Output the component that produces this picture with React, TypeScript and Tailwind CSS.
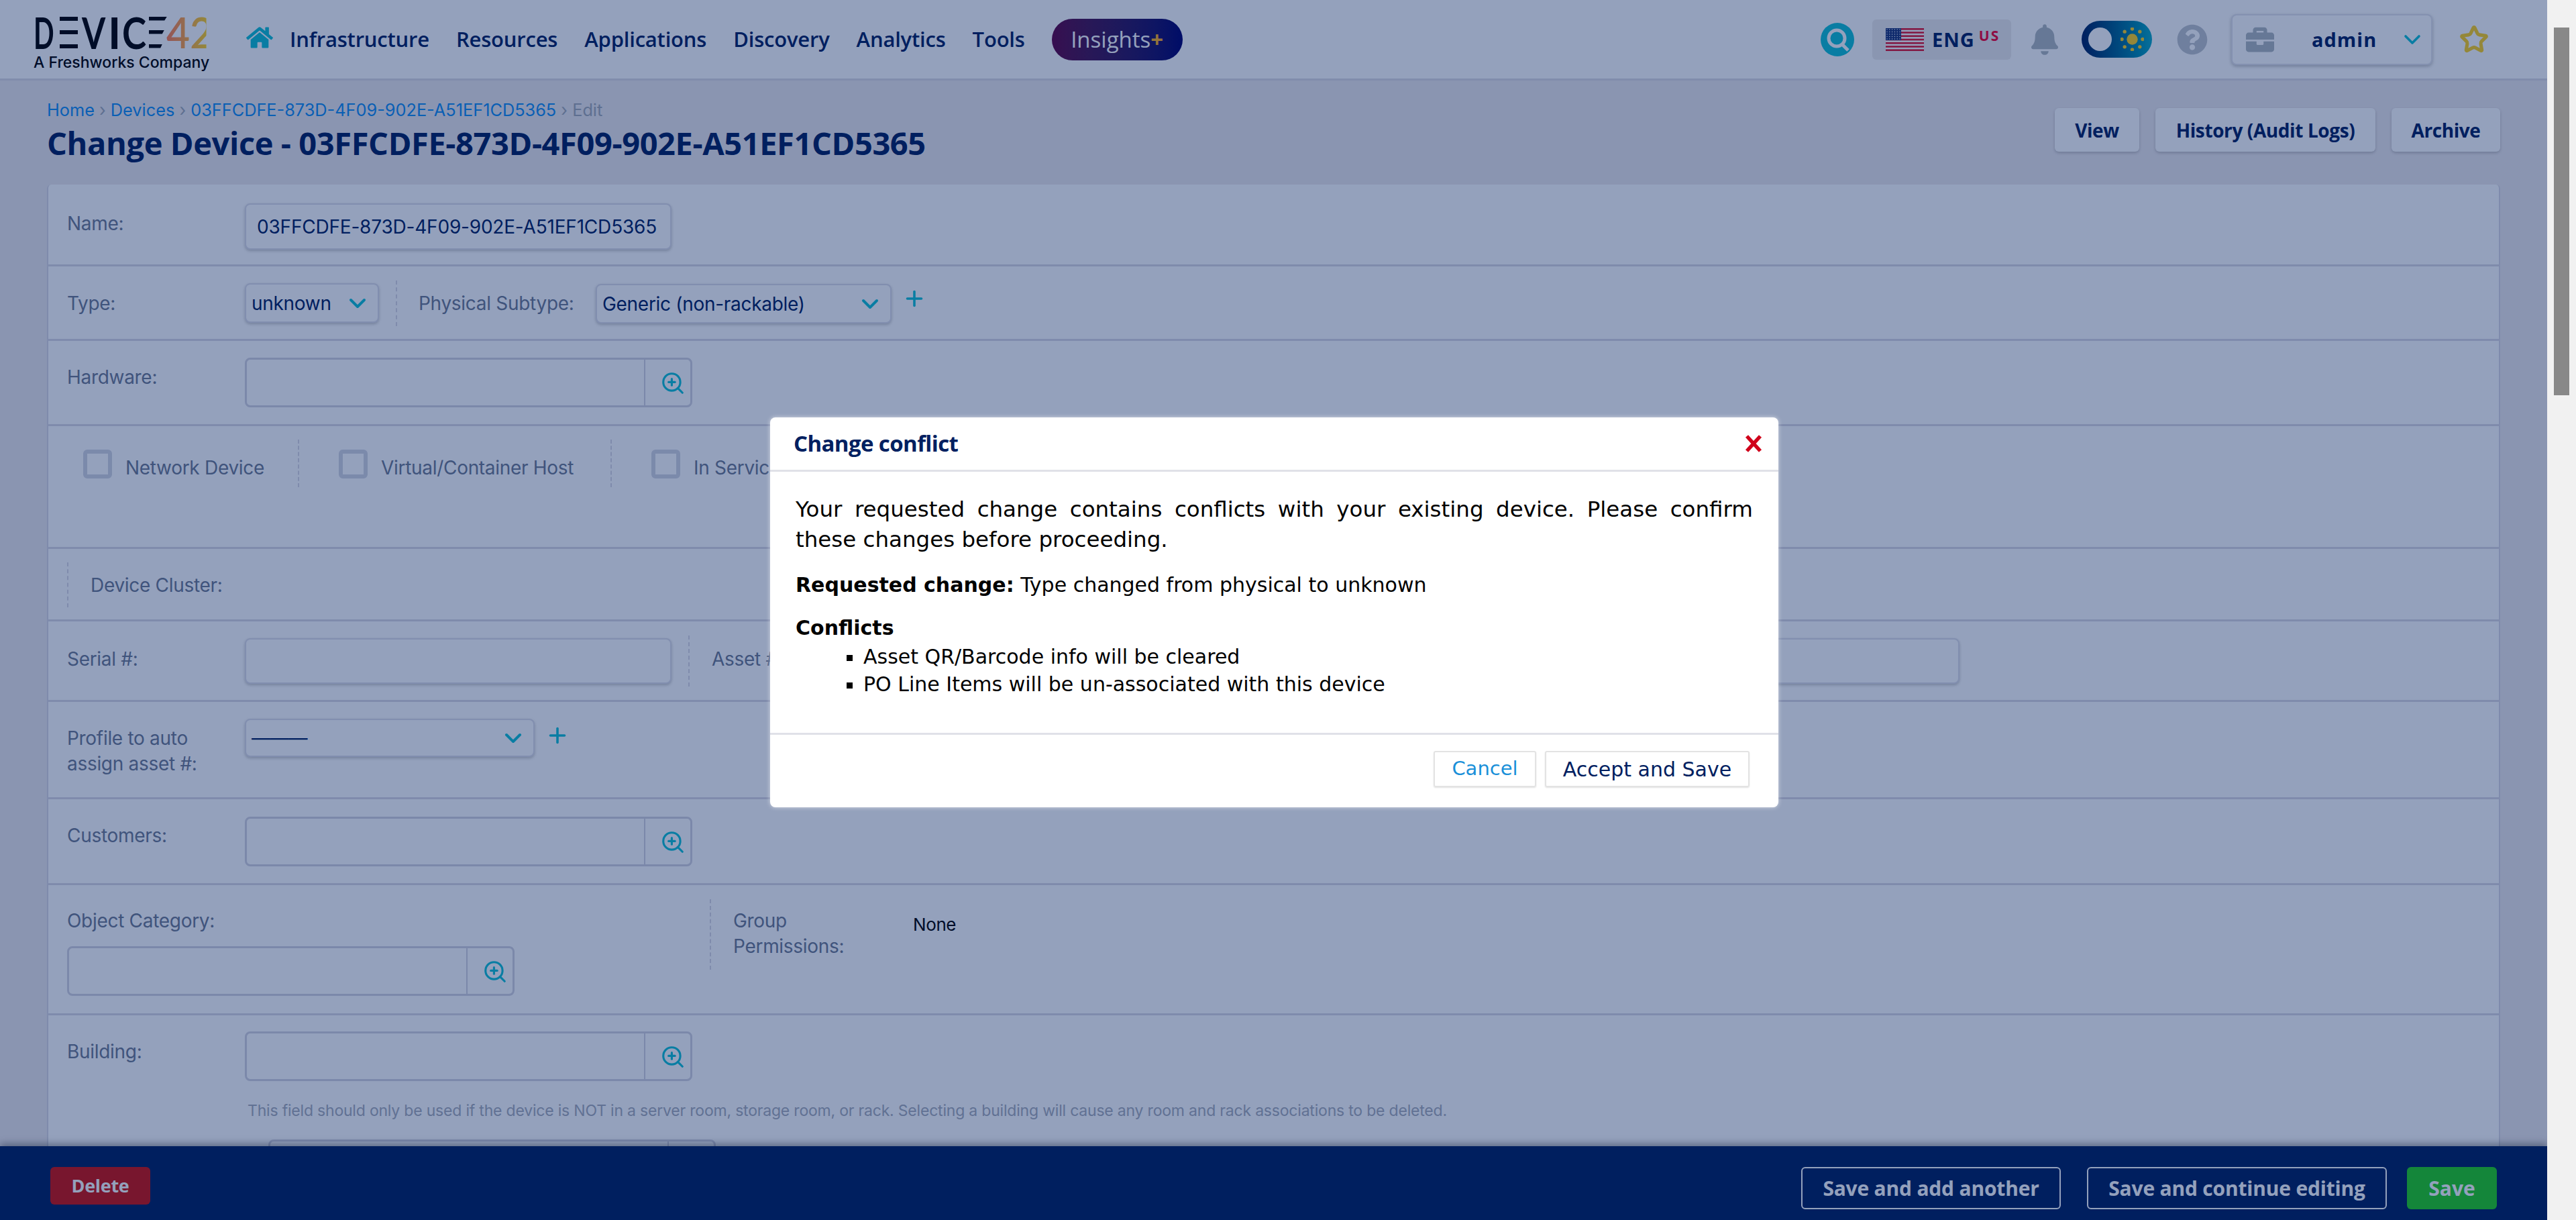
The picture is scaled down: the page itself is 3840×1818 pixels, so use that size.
import { ChevronDown, Plus, Star, ZoomIn } from 'lucide-react';
import { FaBell, FaBriefcase, FaHome, FaQuestionCircle } from 'react-icons/fa';
import type { ReactNode } from 'react';

const FIELD = "font-['Inter',sans-serif]";
const HEAD = "font-['Open_Sans',sans-serif]";

function LogoE({ slant, className = '' }: { slant?: boolean; className?: string }) {
  const bar = slant ? 'bg-black [clip-path:polygon(0_0,100%_0,86%_100%,0_100%)]' : 'bg-black';
  return (
    <span className={`relative block h-[47px] w-[27px] text-[40px] leading-[47px] text-transparent ${className}`}>
      E
      <span className={`absolute left-0 top-0 h-[6px] w-[27px] ${bar}`} />
      <span className={`absolute left-0 top-[20px] h-[6px] ${slant ? 'w-[23px]' : 'w-[27px]'} ${bar}`} />
      <span className={`absolute left-0 top-[41px] h-[6px] ${slant ? 'w-[20px]' : 'w-[27px]'} ${bar}`} />
    </span>
  );
}

function Logo() {
  return (
    <div className="mt-[12px] w-[262px] shrink-0">
      <div className="flex h-[47px] items-center text-[65px] leading-[47px] font-['Lato',sans-serif] font-bold text-black">
        <span className="block w-[39px] origin-left scale-x-[0.62]">D</span>
        <LogoE />
        <span className="ml-[7px] block w-[36px] origin-left scale-x-[0.78]">V</span>
        <span className="ml-[3px] block w-[15px] origin-left">I</span>
        <span className="ml-[6px] block w-[37px] origin-left scale-x-[0.84]">C</span>
        <LogoE slant className="ml-[3px]" />
        <span className="block w-[64px] origin-left scale-x-[0.93] bg-linear-to-r from-[#ff7a50] to-[#ffd21e] bg-clip-text font-semibold text-transparent">42</span>
      </div>
      <div className="mt-[9px] text-[23px] leading-[24px] font-['Inter',sans-serif] font-medium text-black whitespace-nowrap">
        A Freshworks Company
      </div>
    </div>
  );
}

function TopNav() {
  const items = ['Infrastructure', 'Resources', 'Applications', 'Discovery', 'Analytics', 'Tools'];
  return (
    <nav className={`flex items-center ml-[55px] h-[62px] ${HEAD}`}>
      <FaHome className="w-[40px] h-[36px] text-[#11c2d5] mr-[25px] -mt-[6px]" />
      <div className="flex gap-[40px]">
        {items.map(i => (
          <span key={i} className="text-[31px] font-semibold text-[#002060] tracking-[-0.2px]">{i}</span>
        ))}
      </div>
      <div className="ml-[40px] flex h-[62px] w-[195px] items-center justify-center rounded-[31px] bg-linear-to-r from-[#5f0245] to-[#00006e] text-[33px] font-normal text-white">
        Insights<span className="font-bold text-[#ffb020]">+</span>
      </div>
    </nav>
  );
}

function SearchBadge() {
  return (
    <svg viewBox="0 0 50 50" className="w-[50px] h-[50px]">
      <circle cx="25" cy="25" r="25" fill="#11c2d5" />
      <circle cx="24" cy="23" r="12" fill="none" stroke="#fff" strokeWidth="5" />
      <path d="M32 32 L41 41" stroke="#fff" strokeWidth="5" />
    </svg>
  );
}

function Flag() {
  const dots = [];
  for (let r = 0; r < 5; r++) {
    for (let c = 0; c < 6; c++) dots.push([2 + c * 3.8, 2 + r * 3.5]);
  }
  return (
    <svg viewBox="0 0 57 34" className="w-[57px] h-[34px]">
      <rect width="57" height="34" fill="#fff" />
      {[0, 2, 4, 6, 8, 10, 12].map(i => (
        <rect key={i} y={(i * 34) / 13} width="57" height={34 / 13} fill="#e0142f" />
      ))}
      <rect width="23" height="18" fill="#1c3578" />
      {dots.map(([x, y]) => (
        <circle key={`${x}-${y}`} cx={x} cy={y} r="0.7" fill="#fff" />
      ))}
    </svg>
  );
}

function ThemeToggle() {
  return (
    <div className="relative h-[55px] w-[105px] rounded-[28px] bg-linear-to-r from-[#002060] to-[#0eaac4]">
      <span className="absolute left-[10px] top-[10px] h-[35px] w-[35px] rounded-full bg-white" />
      <svg viewBox="0 0 34 34" className="absolute left-[58px] top-[10px] h-[35px] w-[35px]">
        <circle cx="17" cy="17" r="8" fill="#ffd21e" />
        {[[17, 2], [17, 32], [2, 17], [32, 17], [6, 6], [28, 6], [6, 28], [28, 28]].map(([x, y]) => (
          <circle key={`${x}-${y}`} cx={x} cy={y} r="2.6" fill="#ffd21e" />
        ))}
      </svg>
    </div>
  );
}

function TopBar() {
  return (
    <header className="flex h-[120px] items-center border-b-[3px] border-[#dcdbe3] bg-white pl-[50px] pr-[87px]">
      <Logo />
      <TopNav />
      <div className="ml-auto flex items-center">
        <SearchBadge />
        <div className="ml-[27px] flex h-[60px] w-[207px] items-center rounded-md bg-[#eeedec] pl-[20px]">
          <Flag />
          <span className={`ml-[12px] text-[29px] font-bold tracking-[1px] text-[#002060] ${HEAD}`}>ENG</span>
          <span className={`ml-[6px] -mt-[10px] text-[21px] font-bold tracking-[2px] text-[#f5002f] ${HEAD}`}>US</span>
        </div>
        <FaBell className="ml-[30px] h-[46px] w-[40px] text-[#b0b8bd]" />
        <div className="ml-[35px]"><ThemeToggle /></div>
        <FaQuestionCircle className="ml-[37px] h-[46px] w-[46px] text-[#bfc4cb]" />
        <div className="ml-[35px] flex h-[76px] w-[300px] items-center rounded-lg border-2 border-[#e3e3ea] bg-white pl-[18px] pr-[8px] shadow-[0_2px_5px_rgba(0,0,0,0.25)]">
          <FaBriefcase className="h-[42px] w-[46px] text-[#b0b8bd]" />
          <span className={`ml-[54px] text-[29px] font-bold tracking-[1px] text-[#002060] ${HEAD}`}>admin</span>
          <ChevronDown className="ml-auto h-[40px] w-[40px] text-[#11c2d5]" strokeWidth={2.2} />
        </div>
        <Star className="ml-[40px] h-[44px] w-[44px] text-[#ffd21e]" strokeWidth={2.8} />
      </div>
    </header>
  );
}

function TitleBar() {
  return (
    <div className="flex h-[155px] items-start justify-between px-[70px]">
      <div>
        <div className={`mt-[29px] h-[30px] text-[25.3px] leading-[30px] ${FIELD} text-[#118df2] whitespace-nowrap`}>
          Home <span className="text-[#a3aab4]">›</span> Devices <span className="text-[#a3aab4]">›</span> 03FFCDFE-873D-4F09-902E-A51EF1CD5365{' '}
          <span className="text-[#a3aab4]">› Edit</span>
        </div>
        <h1 className={`mt-[4px] text-[47px] leading-[60px] font-bold text-[#002060] ${HEAD} tracking-[-0.4px] whitespace-nowrap`}>
          Change Device - 03FFCDFE-873D-4F09-902E-A51EF1CD5365
        </h1>
      </div>
      <div className={`mt-[41px] flex gap-[24px] ${HEAD}`}>
        {[['View', 'w-[126px]'], ['History (Audit Logs)', 'w-[328px]'], ['Archive', 'w-[162px]']].map(([t, w]) => (
          <span key={t} className={`flex h-[65px] ${w} items-center justify-center rounded-md bg-white text-[28px] font-bold tracking-[-0.4px] text-[#002060] shadow-[0_2px_4px_rgba(0,0,0,0.2)]`}>{t}</span>
        ))}
      </div>
    </div>
  );
}

function Label({ children, className = '' }: { children: ReactNode; className?: string }) {
  return <span className={`text-[28px] leading-[38px] text-[#6f7a92] tracking-[-0.3px] ${FIELD} ${className}`}>{children}</span>;
}

function Row({ h, children, last }: { h: string; children: ReactNode; last?: boolean }) {
  return <div className={`flex ${h} items-start pl-[28px] ${last ? '' : 'border-b-[3px] border-[#dbdae3]'}`}>{children}</div>;
}

function Dashed({ className }: { className: string }) {
  return <span className={`shrink-0 border-l-2 border-dashed border-[#dbdae3] ${className}`} />;
}

function LookupInput({ className = 'w-[667px]' }: { className?: string }) {
  return (
    <div className={`flex h-[74px] ${className} rounded-lg border-[3px] border-[#d5d5e0] bg-white`}>
      <div className="flex-1" />
      <div className="flex w-[69px] items-center justify-center border-l-2 border-[#d5d5e0] pl-[14px]">
        <ZoomIn className="mt-[2px] h-[38px] w-[38px] text-[#11c2d5]" strokeWidth={2} />
      </div>
    </div>
  );
}

function SelectBox({ className, children }: { className: string; children: ReactNode }) {
  return (
    <div className={`flex items-center rounded-lg border-2 border-[#dfdfe8] bg-white pl-[8px] pr-[10px] text-[28px] text-[#002060] shadow-[0_2px_4px_rgba(0,0,0,0.22)] ${FIELD} ${className}`}>
      <span className="tracking-[-0.3px] whitespace-nowrap">{children}</span>
      <ChevronDown className="ml-auto h-[40px] w-[40px] text-[#11c2d5]" strokeWidth={2.4} />
    </div>
  );
}

function TextBox({ className, children }: { className: string; children?: ReactNode }) {
  return (
    <div className={`flex items-center rounded-lg border-2 border-[#dfdfe8] bg-white pl-[16px] text-[28px] text-[#002060] shadow-[0_2px_4px_rgba(0,0,0,0.22)] ${FIELD} ${className}`}>
      <span className="tracking-[-0.2px] whitespace-nowrap">{children}</span>
    </div>
  );
}

function CheckItem({ label, width }: { label: string; width: string }) {
  return (
    <div className={`flex shrink-0 items-start ${width}`}>
      <span className="mt-[35px] h-[43px] w-[43px] shrink-0 rounded-md border-[6px] border-[#d5d7e2] bg-white" />
      <Label className="ml-[20px] mt-[43px] whitespace-nowrap">{label}</Label>
    </div>
  );
}

function DeviceForm() {
  return (
    <div className="mx-[70px] rounded-t-md border-x-2 border-[#dbdae3] bg-white">
      <Row h="h-[122px]">
        <Label className="mt-[39px] w-[265px]">Name:</Label>
        <TextBox className="mt-[28px] h-[69px] w-[636px]">03FFCDFE-873D-4F09-902E-A51EF1CD5365</TextBox>
      </Row>
      <Row h="h-[111px]">
        <Label className="mt-[36px] w-[265px]">Type:</Label>
        <SelectBox className="mt-[25px] h-[59px] w-[200px]">unknown</SelectBox>
        <Dashed className="ml-[25px] mt-[21px] h-[68px]" />
        <Label className="ml-[32px] mt-[36px] w-[264px]">Physical Subtype:</Label>
        <SelectBox className="mt-[26px] h-[59px] w-[441px]">Generic (non-rackable)</SelectBox>
        <Plus className="ml-[16px] mt-[30px] h-[36px] w-[36px] text-[#11c2d5]" strokeWidth={2.4} />
      </Row>
      <Row h="h-[127px]">
        <Label className="mt-[35px] w-[265px]">Hardware:</Label>
        <div className="mt-[25px]"><LookupInput /></div>
      </Row>
      <div className="flex h-[183px] items-start border-b-[3px] border-[#dbdae3] pl-[52px]">
        <CheckItem label="Network Device" width="w-[320px]" />
        <Dashed className="mt-[20px] h-[71px]" />
        <div className="ml-[59px] flex">
          <CheckItem label="Virtual/Container Host" width="w-[405px]" />
          <Dashed className="mt-[20px] h-[71px]" />
        </div>
        <div className="ml-[59px]"><CheckItem label="In Service" width="w-[300px]" /></div>
      </div>
      <Row h="h-[108px]">
        <Dashed className="mt-[20px] h-[67px]" />
        <Label className="ml-[33px] mt-[35px]">Device Cluster:</Label>
      </Row>
      <Row h="h-[120px]">
        <Label className="mt-[37px] w-[265px]">Serial #:</Label>
        <TextBox className="mt-[25px] h-[68px] w-[636px]" />
        <Dashed className="ml-[25px] mt-[21px] h-[76px]" />
        <Label className="ml-[33px] mt-[37px] w-[260px]">Asset #:</Label>
        <TextBox className="mt-[25px] h-[68px] w-[1600px]" />
      </Row>
      <Row h="h-[145px]">
        <Label className="mt-[35px] w-[265px]">Profile to auto<br />assign asset #:</Label>
        <SelectBox className="mt-[25px] h-[57px] w-[432px]">———</SelectBox>
        <Plus className="ml-[16px] mt-[32px] h-[36px] w-[36px] text-[#11c2d5]" strokeWidth={2.4} />
      </Row>
      <Row h="h-[128px]">
        <Label className="mt-[35px] w-[265px]">Customers:</Label>
        <div className="mt-[26px]"><LookupInput /></div>
      </Row>
      <Row h="h-[194px]">
        <div className="w-[958px] shrink-0">
          <Label className="mt-[34px] block">Object Category:</Label>
          <div className="mt-[19px]"><LookupInput /></div>
        </div>
        <Dashed className="mt-[21px] h-[105px]" />
        <Label className="ml-[33px] mt-[34px] w-[268px] leading-[37px]">Group<br />Permissions:</Label>
        <span className={`mt-[43px] text-[26px] leading-[32px] tracking-[-0.4px] text-black ${FIELD}`}>None</span>
      </Row>
      <Row h="h-[300px]" last>
        <div className="w-[265px] shrink-0">
          <Label className="mt-[35px] block">Building:</Label>
        </div>
        <div className="mt-[24px]">
          <LookupInput />
          <p className={`mt-[29px] ml-[4px] text-[23px] leading-[30px] tracking-[-0.2px] text-[#a7adb9] whitespace-nowrap ${FIELD}`}>
            This field should only be used if the device is NOT in a server room, storage room, or rack. Selecting a building will cause any room and rack associations to be deleted.
          </p>
          <div className="ml-[35px] mt-[28px]"><LookupInput /></div>
        </div>
      </Row>
    </div>
  );
}

function ActionBar() {
  const outline = 'flex h-[63px] items-center justify-center rounded-md border-2 border-white text-[30px] font-bold tracking-[-0.2px] text-white';
  return (
    <div className={`absolute inset-x-0 bottom-0 flex h-[110px] items-start bg-[#002060] pl-[75px] pr-[75px] pt-[31px] shadow-[0_-4px_10px_rgba(0,0,0,0.35)] ${HEAD}`}>
      <span className="flex h-[56px] w-[149px] items-center justify-center rounded-md bg-[#cf110c] text-[27px] font-bold tracking-[-0.3px] text-white">Delete</span>
      <div className="ml-auto flex">
        <span className={`${outline} w-[387px]`}>Save and add another</span>
        <span className={`${outline} ml-[39px] w-[447px]`}>Save and continue editing</span>
        <span className="ml-[30px] flex h-[63px] w-[134px] items-center justify-center rounded-md bg-[#24d120] text-[30px] font-bold text-white">Save</span>
      </div>
    </div>
  );
}

function ConflictModal() {
  return (
    <div className="absolute left-[1148px] top-[622px] flex h-[581px] w-[1503px] flex-col rounded-lg bg-white shadow-[0_0_6px_rgba(255,255,255,0.6)]">
      <div className="flex h-[81px] shrink-0 items-center justify-between border-b-[3px] border-[#e0e1e8] pl-[35px] pr-[24px]">
        <span className={`text-[33px] font-bold tracking-[-0.6px] text-[#002060] ${HEAD}`}>Change conflict</span>
        <svg viewBox="0 0 26 26" className="h-[26px] w-[26px]">
          <path d="M3 2 L23 24 M23 2 L3 24" stroke="#d0021b" strokeWidth="5.5" />
        </svg>
      </div>
      <div className="flex-1 px-[38px] pt-[34px] text-black font-['DejaVu_Sans',sans-serif]">
        <p className="text-[32.5px] leading-[45px]">
          <span className="block text-justify [text-align-last:justify]">Your requested change contains conflicts with your existing device. Please confirm</span>
          <span className="block">these changes before proceeding.</span>
        </p>
        <p className="mt-[25px] text-[30px] leading-[40px]"><b>Requested change:</b> Type changed from physical to unknown</p>
        <p className="mt-[24px] text-[30px] font-bold leading-[40px]">Conflicts</p>
        <ul className="ml-[76px] mt-[2px] list-[square] pl-[25px] text-[30px] leading-[41px]">
          <li>Asset QR/Barcode info will be cleared</li>
          <li>PO Line Items will be un-associated with this device</li>
        </ul>
      </div>
      <div className="flex h-[111px] shrink-0 items-start justify-end gap-[13px] border-t-[3px] border-[#e0e1e8] pr-[43px] pt-[24px] font-['DejaVu_Sans',sans-serif]">
        <span className="flex h-[54px] w-[153px] items-center justify-center rounded-[3px] border-2 border-[#e3e3e3] text-[29px] text-[#1a90d9] shadow-[0_1px_2px_rgba(0,0,0,0.12)]">Cancel</span>
        <span className="flex h-[54px] w-[305px] items-center justify-center rounded-[3px] border-2 border-[#e3e3e3] text-[30px] text-[#002060] shadow-[0_1px_2px_rgba(0,0,0,0.12)]">Accept and Save</span>
      </div>
    </div>
  );
}

export default function App() {
  return (
    <div className="flex h-[1818px] w-[3840px] overflow-hidden bg-[#f1f1f1]">
      <main className="relative h-full w-[3797px] shrink-0 overflow-hidden bg-[#eeeaec]">
        <TopBar />
        <TitleBar />
        <DeviceForm />
        <ActionBar />
        <div className="absolute inset-0 bg-[rgba(0,32,96,0.42)]" />
        <ConflictModal />
      </main>
      <div className="flex-1 pl-[10px] pt-[41px]">
        <div className="h-[548px] w-[23px] bg-[#888888]" />
      </div>
    </div>
  );
}
